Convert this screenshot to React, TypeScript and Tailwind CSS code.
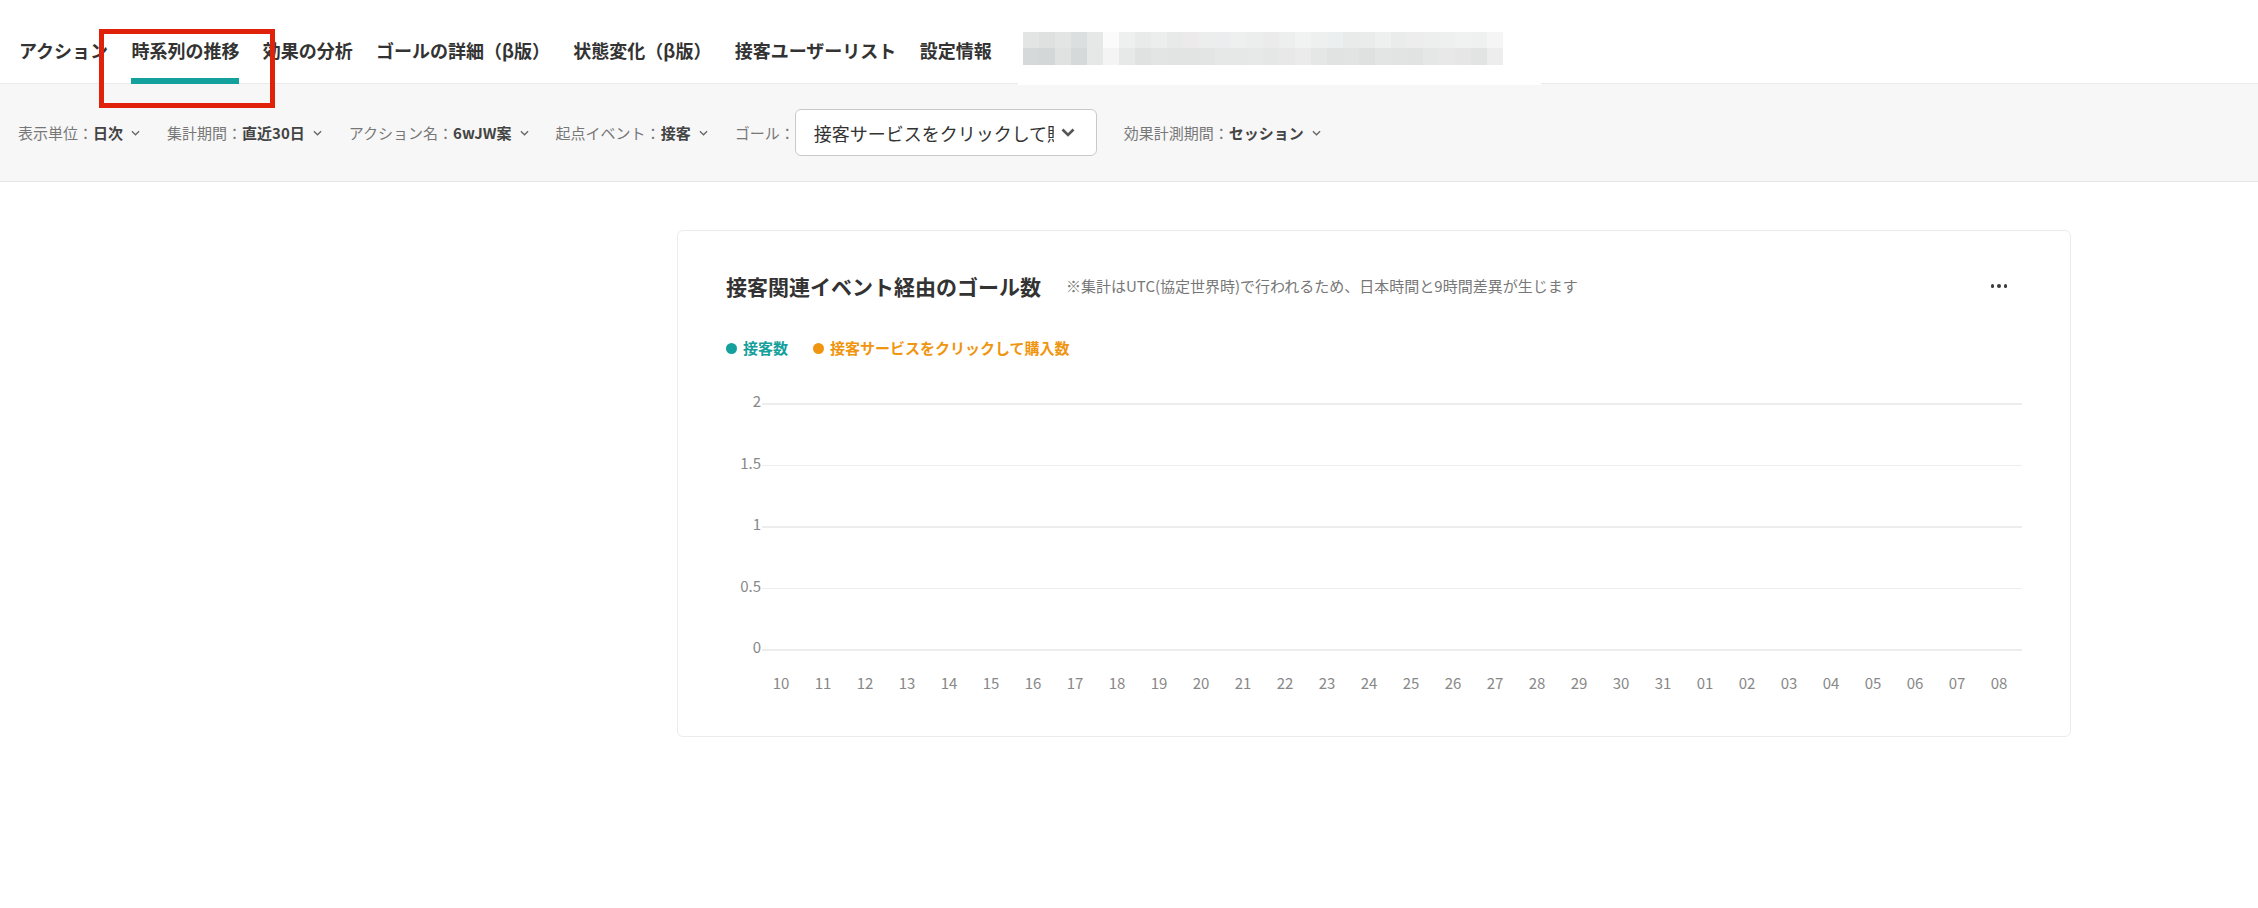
import React from "react";

const TABS = [
  "アクション",
  "時系列の推移",
  "効果の分析",
  "ゴールの詳細（β版）",
  "状態変化（β版）",
  "接客ユーザーリスト",
  "設定情報",
];

const TOP_TILES = [
  "#e3e4e4", "#dfe0e0", "#e3e4e4", "#dcdfe0", "#e6e8e8", "#fbfbfb", "#eef0ef", "#e9ebeb", "#eceeee", "#e8eaea",
  "#eceaea", "#eceeee", "#ebedee", "#eef0f0", "#eceeee", "#ebebeb", "#edefef", "#f1f3f2", "#eef0f0", "#ecefef",
  "#e9ebeb", "#eaeceb", "#eef0ef", "#eaeceb", "#ecedec", "#edefee", "#eef0ef", "#f0f2f1", "#eff1f0", "#f5f5f5",
];
const BOTTOM_TILES = [
  "#d5d9da", "#d3d7d7", "#e0e2e2", "#d6d9d9", "#e6e7e7", "#f4f4f4", "#e7e9e9", "#e0e2e2", "#e3e5e5", "#e2e4e4",
  "#e2e4e4", "#e3e5e5", "#e6e8e8", "#e6e8e8", "#e7e9e9", "#e5e7e7", "#e8e8e8", "#ebebeb", "#e5e7e7", "#e1e3e3",
  "#e2e4e4", "#dfe1e1", "#e3e5e5", "#e2e4e4", "#e1e3e3", "#e5e6e6", "#e8e8e8", "#e6e6e6", "#e2e4e4", "#ededed",
];

const Y_TICKS = ["2", "1.5", "1", "0.5", "0"];
const X_TICKS = [
  "10", "11", "12", "13", "14", "15", "16", "17", "18", "19", "20", "21", "22", "23", "24",
  "25", "26", "27", "28", "29", "30", "31", "01", "02", "03", "04", "05", "06", "07", "08",
];

function Chevron() {
  return (
    <svg viewBox="0 0 10 6" className="ml-[8px] h-[6px] w-[9px]" fill="none" stroke="#666" strokeWidth="1.4">
      <path d="M1 1l4 4 4-4" />
    </svg>
  );
}

function Filter({ label, value }: { label: string; value: string }) {
  return (
    <div className="flex items-center text-[15px] leading-[22px]">
      <span className="text-[#777]">{label}：</span>
      <span className="font-bold text-[#444]">{value}</span>
      <Chevron />
    </div>
  );
}

export default function App() {
  return (
    <div className="relative min-h-[908px] w-full bg-white font-['Noto_Sans_CJK_JP',sans-serif]">
      {/* tabs */}
      <nav className="flex h-[84px] items-start gap-[23.3px] border-b border-[#ebebeb] pl-[19px]">
        {TABS.map((t, i) => (
          <div key={t} className="relative h-full">
            <span className="block pt-[37px] text-[18px] font-bold leading-[27px] text-[#333]">{t}</span>
            {i === 1 && <span className="absolute bottom-[-1px] left-0 h-[6px] w-full bg-[#12a19d]" />}
          </div>
        ))}
        {/* redacted block */}
        <div className="ml-[8px] mt-[32px] flex flex-col">
          <div className="flex">
            {TOP_TILES.map((c, i) => (
              <span key={i} className="h-[16px] w-[16px]" style={{ backgroundColor: c }} />
            ))}
          </div>
          <div className="flex">
            {BOTTOM_TILES.map((c, i) => (
              <span key={i} className="h-[17px] w-[16px]" style={{ backgroundColor: c }} />
            ))}
          </div>
        </div>
      </nav>
      <span className="absolute left-[1018px] top-[81px] h-[4px] w-[523px] bg-white" />

      {/* highlight box */}
      <span className="absolute left-[99px] top-[29px] z-10 h-[79px] w-[176px] border-[5px] border-[#e1220b]" />

      {/* filters */}
      <div className="flex h-[98px] items-center gap-[27px] border-b border-[#e6e6e6] bg-[#f7f7f7] pl-[18px]">
        <Filter label="表示単位" value="日次" />
        <Filter label="集計期間" value="直近30日" />
        <Filter label="アクション名" value="6wJW案" />
        <Filter label="起点イベント" value="接客" />
        <div className="flex items-center">
          <span className="text-[15px] leading-[22px] text-[#777]">ゴール：</span>
          <div className="flex h-[47px] w-[302px] items-center rounded-[6px] border border-[#c9c9c9] bg-white pl-[18px]">
            <span className="w-[240px] overflow-hidden whitespace-nowrap text-[18px] leading-[26px] text-[#333]">
              接客サービスをクリックして購入数
            </span>
            <svg viewBox="0 0 14 9" className="ml-[7px] h-[9px] w-[14px]" fill="none" stroke="#555" strokeWidth="2.6">
              <path d="M1.5 1.5l5.5 5.5 5.5-5.5" />
            </svg>
          </div>
        </div>
        <Filter label="効果計測期間" value="セッション" />
      </div>

      {/* card */}
      <div className="pl-[677px] pr-[187px] pt-[48px]">
        <div className="h-[507px] rounded-[6px] border border-[#ececec] px-[48px] pt-[40px]">
          <div className="flex items-center">
            <h2 className="text-[21px] font-bold leading-[30px] text-[#333]">接客関連イベント経由のゴール数</h2>
            <span className="ml-[25px] text-[15px] leading-[22px] text-[#777]">
              ※集計はUTC(協定世界時)で行われるため、日本時間と9時間差異が生じます
            </span>
            <div className="ml-auto mr-[15px] flex gap-[3px]">
              <span className="h-[3.5px] w-[3.5px] rounded-full bg-[#3a3a3a]" />
              <span className="h-[3.5px] w-[3.5px] rounded-full bg-[#3a3a3a]" />
              <span className="h-[3.5px] w-[3.5px] rounded-full bg-[#3a3a3a]" />
            </div>
          </div>

          <div className="mt-[36px] flex items-center gap-[25px] text-[15px] font-bold leading-[22px]">
            <div className="flex items-center gap-[6px] text-[#16a09c]">
              <span className="h-[11px] w-[11px] rounded-full bg-[#16a09c]" />
              接客数
            </div>
            <div className="flex items-center gap-[6px] text-[#f0950f]">
              <span className="h-[11px] w-[11px] rounded-full bg-[#f0950f]" />
              接客サービスをクリックして購入数
            </div>
          </div>

          {/* chart */}
          <div className="mt-[32px] flex flex-col gap-[41.5px]">
            {Y_TICKS.map((v) => (
              <div key={v} className="flex h-[20px] items-start">
                <span className="w-[36px] pr-[1px] text-right text-[15px] leading-[20px] text-[#888]">{v}</span>
                <span className="mt-[12px] h-[1.5px] flex-1 bg-[#ededed]" />
              </div>
            ))}
          </div>
          <div className="ml-[34px] mt-[16px] flex w-[1260px]">
            {X_TICKS.map((d) => (
              <span key={d} className="flex-1 text-center text-[15px] leading-[20px] text-[#888]">
                {d}
              </span>
            ))}
          </div>
        </div>
      </div>
    </div>
  );
}
